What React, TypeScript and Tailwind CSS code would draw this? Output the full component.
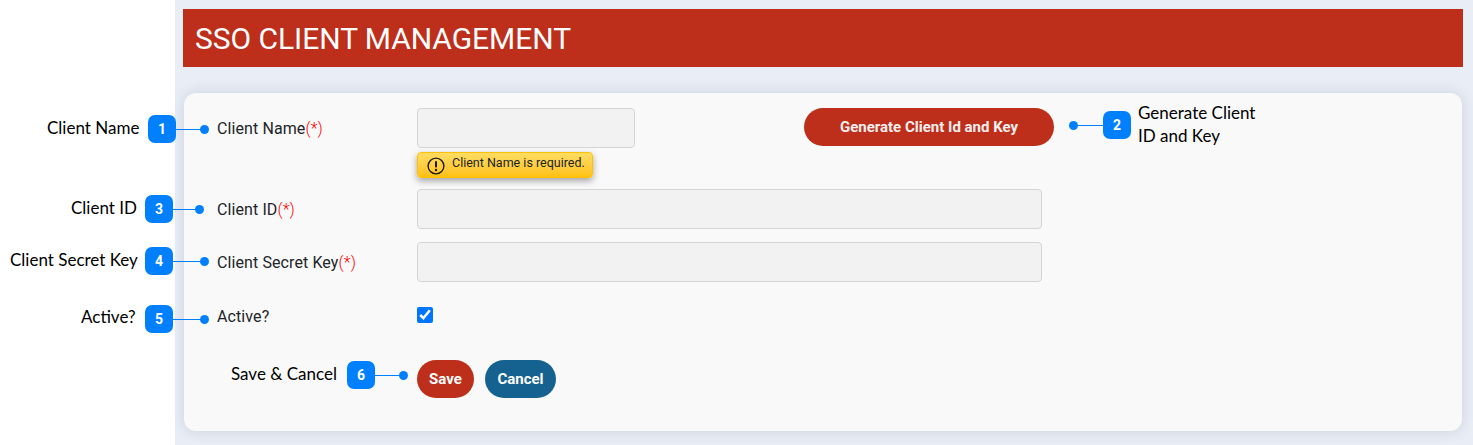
import React from "react";

function Callout({ n, className, width }: { n: number; className: string; width: string }) {
  return (
    <div className={`absolute flex items-center ${className}`}>
      <span className="flex h-[28px] w-[28px] items-center justify-center rounded-[7px] bg-[#0080ff] text-[14px] font-bold text-white font-['Roboto',sans-serif]">
        {n}
      </span>
      <span className={`h-[1px] bg-[#0080ff] ${width}`} />
      <span className="-ml-[1px] h-[9px] w-[9px] rounded-full bg-[#0080ff]" />
    </div>
  );
}

function Note({ className, children }: { className: string; children: React.ReactNode }) {
  return <div className={`absolute text-[17px] leading-[23px] text-black font-['Lato',sans-serif] ${className}`}>{children}</div>;
}

function Label({ text, required, className = "" }: { text: string; required?: boolean; className?: string }) {
  return (
    <label className={`w-[200px] shrink-0 text-[16px] leading-[20px] tracking-[0.1px] text-[#212529] ${className}`}>
      {text}
      {required && <span className="font-light text-[#ff0000]">(*)</span>}
    </label>
  );
}

const inputClass = "h-[40px] rounded-[4px] border border-[#d4d4d4] bg-[#f2f2f2]";

export default function App() {
  return (
    <div className="relative flex h-[445px] overflow-hidden bg-white font-['Roboto',sans-serif]">
      <div className="w-[175px] shrink-0 bg-white" />
      <main className="relative flex-1 bg-[#e8edf6] pl-[8px] pr-[10px] pt-[9px]">
        <div className="flex h-[58px] items-center bg-[#bd2f1b] pl-[12px] text-[30px] tracking-[-0.05px] text-white">SSO CLIENT MANAGEMENT</div>

        <div className="ml-[1px] mr-[1px] mt-[26px] h-[338px] rounded-[12px] bg-[#f9f9f9] pl-[33px] pt-[15px] shadow-[0_0_14px_rgba(60,70,90,0.16)]">
          <div className="flex">
            <Label text="Client Name" required className="pt-[11px]" />
            <div className="w-[218px]">
              <input className={`${inputClass} w-full`} readOnly />
              <div className="mt-[4px] flex h-[26px] w-[176px] items-center gap-[7px] rounded-[4px] border border-[#ffc107] bg-gradient-to-b from-[#ffdc60] to-[#ffc107] pl-[9px] text-[12.5px] leading-[14px] text-[#212529] shadow-[0_3px_7px_rgba(0,0,0,0.35)]">
                <svg width="18" height="18" viewBox="0 0 18 18" className="mt-[1px] shrink-0">
                  <circle cx="9" cy="9" r="7.9" fill="none" stroke="#1a1a1a" strokeWidth="1.4" />
                  <rect x="8" y="4" width="2" height="6.5" rx="0.8" fill="#1a1a1a" />
                  <circle cx="9" cy="13" r="1.2" fill="#1a1a1a" />
                </svg>
                <span className="-mt-[4px]">Client Name is required.</span>
              </div>
            </div>
            <button className="ml-[169px] h-[38px] w-[250px] rounded-full bg-[#bd2f1b] text-[15px] font-bold text-[#f5eeee]">
              Generate Client Id and Key
            </button>
          </div>

          <div className="mt-[11px] flex items-center">
            <Label text="Client ID" required className="pt-[1px]" />
            <input className={`${inputClass} w-[625px]`} readOnly />
          </div>

          <div className="mt-[13px] flex items-center">
            <Label text="Client Secret Key" required className="pt-[1px]" />
            <input className={`${inputClass} w-[625px]`} readOnly />
          </div>

          <div className="mt-[24px] flex items-start">
            <Label text="Active?" className="pt-[1px]" />
            <input type="checkbox" defaultChecked className="mt-[1px] h-[16px] w-[16px] accent-[#0075ff]" />
          </div>

          <div className="ml-[200px] mt-[33px] flex gap-[11px]">
            <button className="h-[38px] w-[57px] rounded-full bg-[#bd2f1b] text-[15px] font-bold text-white">Save</button>
            <button className="h-[38px] w-[71px] rounded-full bg-[#156291] text-[15px] font-bold text-white">Cancel</button>
          </div>
        </div>
      </main>

      <Note className="left-[47px] top-[116px]">Client Name</Note>
      <Callout n={1} className="left-[148px] top-[115px]" width="w-[25px]" />
      <Note className="left-[1138px] top-[101px]">
        Generate Client
        <br />
        ID and Key
      </Note>
      <div className="absolute left-[1069px] top-[111px] flex flex-row-reverse items-center">
        <span className="flex h-[28px] w-[28px] items-center justify-center rounded-[7px] bg-[#0080ff] text-[14px] font-bold text-white">2</span>
        <span className="h-[1px] w-[26px] bg-[#0080ff]" />
        <span className="-mr-[1px] h-[9px] w-[9px] rounded-full bg-[#0080ff]" />
      </div>
      <Note className="left-[71px] top-[196px]">Client ID</Note>
      <Callout n={3} className="left-[145px] top-[195px]" width="w-[23px]" />
      <Note className="left-[10px] top-[248px]">Client Secret Key</Note>
      <Callout n={4} className="left-[145px] top-[247px]" width="w-[28px]" />
      <Note className="left-[81px] top-[305px]">Active?</Note>
      <Callout n={5} className="left-[145px] top-[305px]" width="w-[28px]" />
      <Note className="left-[231px] top-[362px]">Save &amp; Cancel</Note>
      <Callout n={6} className="left-[347px] top-[361px]" width="w-[25px]" />
    </div>
  );
}
